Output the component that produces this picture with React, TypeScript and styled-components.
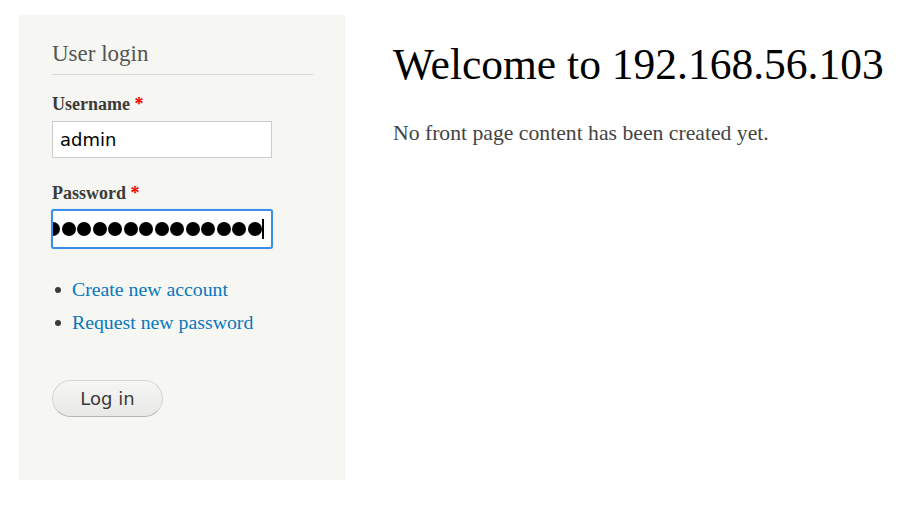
import React from "react";
import styled, { createGlobalStyle } from "styled-components";

const Global = createGlobalStyle`
  html, body { margin: 0; padding: 0; background: #fff; }
  body { font-family: "Liberation Serif", serif; color: #3b3b3b; }
  * { box-sizing: border-box; }
`;

const Page = styled.div`
  display: flex;
  align-items: flex-start;
  padding: 15px 0 0 19px;
  gap: 48px;
`;

const Sidebar = styled.aside`
  width: 326px;
  height: 465px;
  background: #f6f6f2;
  padding: 27px 32px 0 33px;
  display: flex;
  flex-direction: column;
`;

const BlockTitle = styled.h2`
  margin: 0;
  font-family: "Liberation Serif", serif;
  font-weight: normal;
  font-size: 23px;
  line-height: 23px;
  color: #555;
  padding-bottom: 9px;
  border-bottom: 1px solid #d8d8d4;
`;

const Field = styled.div<{ $top: number }>`
  display: flex;
  flex-direction: column;
  margin-top: ${(p) => p.$top}px;
`;

const Label = styled.label`
  font-family: "Liberation Serif", serif;
  font-weight: bold;
  font-size: 18px;
  line-height: 20px;
  color: #3b3b3b;
  margin-bottom: 7px;
`;

const Req = styled.span`
  color: #e00;
`;

const Input = styled.input`
  width: 220px;
  height: 37px;
  border: 1px solid #ccc;
  background: #fff;
  font-family: "DejaVu Sans", sans-serif;
  font-size: 18px;
  color: #000;
  padding: 0 7px;
  outline: none;
`;

const Dots = styled.div`
  width: 222px;
  height: 40px;
  margin: -1px 0 0 -1px;
  border: 2px solid #3b8fe6;
  border-radius: 3px;
  background: #fff;
  display: flex;
  align-items: center;
  overflow: hidden;
  padding-right: 7px;
  justify-content: flex-end;
  box-shadow: 0 0 1px rgba(59, 143, 230, 0.5);
`;

const Dot = styled.span`
  flex: none;
  width: 14px;
  height: 14px;
  border-radius: 50%;
  background: #000;
  margin-right: 1.5px;
`;

const Caret = styled.span`
  flex: none;
  width: 2px;
  height: 20px;
  background: #000;
  margin-left: -1px;
`;

const Links = styled.ul`
  margin: 24px 0 0 0;
  padding: 0;
  list-style: none;
`;

const Item = styled.li`
  display: flex;
  align-items: center;
  gap: 11px;
  font-size: 19.8px;
  line-height: 33px;
  &::before {
    content: "";
    flex: none;
    width: 6px;
    height: 6px;
    margin-left: 3px;
    border-radius: 50%;
    background: #3b3b3b;
  }
`;

const Link = styled.a`
  color: #0678be;
  text-decoration: none;
  font-family: "Liberation Serif", serif;
`;

const Button = styled.button`
  margin-top: 41px;
  width: 111px;
  height: 37px;
  border: 1px solid #d4d4d4;
  border-bottom-color: #b4b4b4;
  border-radius: 20px;
  background: linear-gradient(#f6f6f5, #e8e8e6);
  font-family: "DejaVu Sans", sans-serif;
  font-size: 18px;
  color: #3a3a3a;
  padding: 0;
  align-self: flex-start;
`;

const Main = styled.main`
  padding-top: 23px;
`;

const Heading = styled.h1`
  margin: 0;
  font-family: "Liberation Serif", serif;
  font-weight: normal;
  font-size: 43.5px;
  line-height: 52px;
  color: #000;
  white-space: nowrap;
`;

const Para = styled.p`
  margin: 31px 0 0;
  font-family: "Liberation Serif", serif;
  font-size: 21.7px;
  color: #444;
`;

export default function App() {
  return (
    <>
      <Global />
      <Page>
        <Sidebar>
          <BlockTitle>User login</BlockTitle>
          <Field $top={19}>
            <Label>
              Username <Req>*</Req>
            </Label>
            <Input defaultValue="admin" readOnly />
          </Field>
          <Field $top={25}>
            <Label>
              Password <Req>*</Req>
            </Label>
            <Dots>
              {Array.from({ length: 15 }).map((_, i) => (
                <Dot key={i} />
              ))}
              <Caret />
            </Dots>
          </Field>
          <Links>
            <Item>
              <Link href="#">Create new account</Link>
            </Item>
            <Item>
              <Link href="#">Request new password</Link>
            </Item>
          </Links>
          <Button>Log in</Button>
        </Sidebar>
        <Main>
          <Heading>Welcome to 192.168.56.103</Heading>
          <Para>No front page content has been created yet.</Para>
        </Main>
      </Page>
    </>
  );
}
